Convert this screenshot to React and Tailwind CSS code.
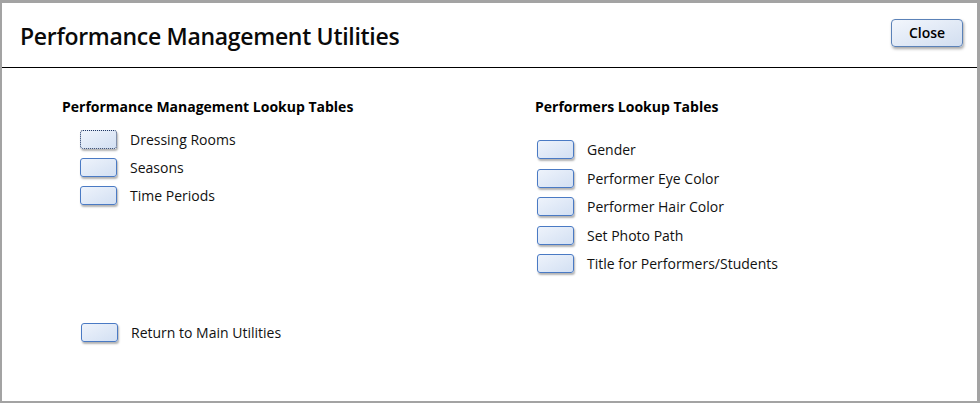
import React from 'react';

const font = { fontFamily: '"Open Sans", "Noto Sans", sans-serif' };

const LookupButton = ({ focused }) => (
  <button
    className={`w-[37px] h-[19px] rounded-[3px] border bg-gradient-to-br from-[#eef3fb] to-[#d3e0f3] shadow-[1px_2px_2px_rgba(0,0,0,0.3)] ${
      focused ? 'border-dotted border-[#1f3560]' : 'border-[#4a7ac4]'
    }`}
  />
);

const Row = ({ label, focused, className = '' }) => (
  <div className={`flex items-center h-[19px] ${className}`}>
    <LookupButton focused={focused} />
    <span className="ml-[13px] text-[14px] leading-[19px] text-[#111]">{label}</span>
  </div>
);

const App = () => {
  return (
    <div
      className="w-[980px] h-[403px] bg-white border-t-[3px] border-l-2 border-r-[3px] border-b-2 border-[#a3a3a3] flex flex-col overflow-hidden"
      style={font}
    >
      {/* Header */}
      <div className="h-[65px] shrink-0 border-b border-black flex items-center justify-between pl-[18px] pr-[14px]">
        <h1 className="text-[23px] font-semibold text-[#0a0a0a] mt-[3px] tracking-[-0.3px]">Performance Management Utilities</h1>
        <button className="w-[72px] h-[28px] -mt-[5px] rounded-[4px] border border-[#5b82b8] bg-gradient-to-br from-[#f2f6fc] to-[#d2def0] shadow-[1px_2px_3px_rgba(0,0,0,0.35)] text-[14px] font-semibold text-black">
          Close
        </button>
      </div>

      {/* Body */}
      <div className="flex flex-1">
        {/* Left column */}
        <div className="w-[473px] pl-[60px] pt-[28px] flex flex-col">
          <h2 className="text-[14px] font-bold text-black">Performance Management Lookup Tables</h2>
          <div className="pl-[18px] mt-[13px] flex flex-col gap-[9px]">
            <Row label="Dressing Rooms" focused />
            <Row label="Seasons" />
            <Row label="Time Periods" />
          </div>
          <div className="pl-[19px] mt-[118px]">
            <Row label="Return to Main Utilities" />
          </div>
        </div>

        {/* Right column */}
        <div className="pl-[60px] pt-[28px] flex flex-col">
          <h2 className="text-[14px] font-bold text-black">Performers Lookup Tables</h2>
          <div className="pl-[2px] mt-[23px] flex flex-col gap-[9.5px]">
            <Row label="Gender" />
            <Row label="Performer Eye Color" />
            <Row label="Performer Hair Color" />
            <Row label="Set Photo Path" />
            <Row label="Title for Performers/Students" />
          </div>
        </div>
      </div>
    </div>
  );
};

export default App;
